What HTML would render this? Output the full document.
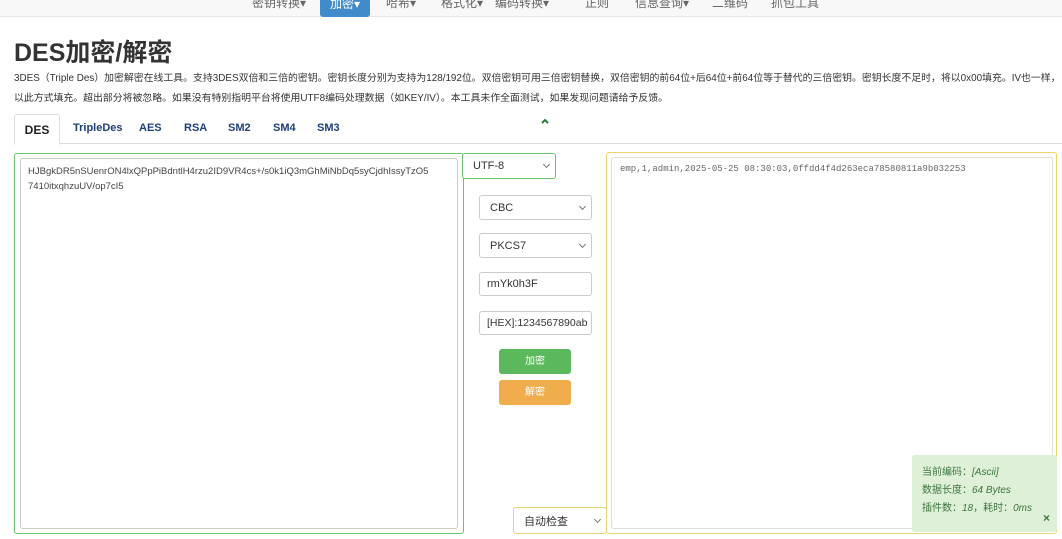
<!DOCTYPE html>
<html><head><meta charset="utf-8"><style>
*{box-sizing:border-box;margin:0;padding:0}
body{width:1062px;height:539px;overflow:hidden;background:#fff;font-family:"Liberation Sans","Noto Sans CJK SC",sans-serif;color:#333;position:relative}
.nav{position:absolute;left:0;top:0;width:1062px;height:17px;background:#f8f8f8;border-bottom:1px solid #e7e7e7}
.nav span{position:absolute;top:-6px;font-size:12px;color:#666;line-height:18px}
.nav .act{background:#428bca;color:#fff;height:22px;top:-5px;padding:0 10px;border-radius:0 0 3px 3px}
h1{position:absolute;left:14px;top:33px;font-size:25px;font-weight:bold;color:#333}
.desc{position:absolute;left:14px;top:69px;font-size:9.9px;line-height:20px;color:#333;white-space:nowrap}
.tabs{position:absolute;left:14px;top:114px;width:1048px;height:30px;border-bottom:1px solid #ddd}
.tabs span{position:absolute;top:8px;font-size:11px;color:#1f3f7a;font-weight:bold}
.tabs .on{left:0;top:0;width:46px;height:31px;border:1px solid #ddd;border-bottom-color:#fff;background:#fff;border-radius:3px 3px 0 0;color:#222;font-size:12px;text-align:center;line-height:30px}
.box{position:absolute;border:1px solid}
.sel{position:absolute;background:#fff;border:1px solid #ccc;border-radius:3px;font-size:11px;padding-left:10px;color:#333;display:flex;align-items:center}
.sel.a:after{content:"";position:absolute;right:6px;top:50%;width:4px;height:4px;border-right:1px solid #777;border-bottom:1px solid #777;transform:translateY(-4px) rotate(45deg)}
.btn{position:absolute;left:499px;width:72px;height:25px;border-radius:3px;color:#fff;font-size:10px;text-align:center;line-height:25px}
</style></head><body>
<div class="nav">
<span style="left:252px">密钥转换▾</span>
<span class="act" style="left:320px">加密▾</span>
<span style="left:386px">哈希▾</span>
<span style="left:441px">格式化▾</span>
<span style="left:495px">编码转换▾</span>
<span style="left:585px">正则</span>
<span style="left:635px">信息查询▾</span>
<span style="left:712px">二维码</span>
<span style="left:771px">抓包工具</span>
</div>
<h1>DES加密/解密</h1>
<div class="desc">3DES（Triple Des）加密解密在线工具。支持3DES双倍和三倍的密钥。密钥长度分别为支持为128/192位。双倍密钥可用三倍密钥替换，双倍密钥的前64位+后64位+前64位等于替代的三倍密钥。密钥长度不足时，将以0x00填充。IV也一样，<br>以此方式填充。超出部分将被忽略。如果没有特别指明平台将使用UTF8编码处理数据（如KEY/IV）。本工具未作全面测试，如果发现问题请给予反馈。</div>
<svg style="position:absolute;left:541px;top:118px" width="8" height="6"><path d="M1 5L4 2L7 5" stroke="#2a7a3a" stroke-width="2" fill="none"/></svg>
<div class="tabs">
<span class="on">DES</span>
<span style="left:59px">TripleDes</span>
<span style="left:125px">AES</span>
<span style="left:170px">RSA</span>
<span style="left:214px">SM2</span>
<span style="left:259px">SM4</span>
<span style="left:303px">SM3</span>
</div>
<div class="box" style="left:14px;top:153px;width:450px;height:381px;border-color:#6cc46c;border-radius:3px"></div>
<div class="box" style="left:20px;top:158px;width:438px;height:371px;border-color:#ccc;border-radius:3px;padding:5px 7px;font-size:9.5px;line-height:15px;color:#444">HJBgkDR5nSUenrON4lxQPpPiBdntlH4rzu2ID9VR4cs+/s0k1iQ3mGhMiNbDq5syCjdhIssyTzO5<br>7410itxqhzuUV/op7cI5</div>
<div class="sel a" style="left:462px;top:153px;width:94px;height:26px;border-color:#6cc46c">UTF-8</div>
<div class="sel a" style="left:479px;top:195px;width:113px;height:25px">CBC</div>
<div class="sel a" style="left:479px;top:233px;width:113px;height:25px">PKCS7</div>
<div class="sel" style="left:479px;top:272px;width:113px;height:24px;padding-left:7px">rmYk0h3F</div>
<div class="sel" style="left:479px;top:311px;width:113px;height:24px;padding-left:7px;font-size:10.5px">[HEX]:1234567890ab</div>
<div class="btn" style="top:349px;background:#5cb85c">加密</div>
<div class="btn" style="top:380px;background:#f0ad4e">解密</div>
<div class="box" style="left:606px;top:152px;width:451px;height:382px;border-color:#ecd56a;border-radius:3px"></div>
<div class="box" style="left:611px;top:157px;width:442px;height:372px;border-color:#ddd;border-radius:3px;padding:6px 8px;font-family:'Liberation Mono',monospace;font-size:9px;color:#666">emp,1,admin,2025-05-25 08:30:03,0ffdd4f4d263eca78580811a9b032253</div>
<div class="sel a" style="left:513px;top:507px;width:94px;height:27px;border-color:#ecd56a">自动检查</div>
<div style="position:absolute;left:912px;top:455px;width:145px;height:77px;background:#dff0d8;border-radius:3px;font-size:10px;color:#3c763d;line-height:18px;padding:9px 10px"><div>当前编码：<i>[Ascii]</i></div><div>数据长度：<i>64 Bytes</i></div><div>插件数：<i>18</i>，耗时：<i>0ms</i></div><span style="position:absolute;right:7px;bottom:5px;font-weight:bold;font-size:12px">×</span></div>
</body></html>
